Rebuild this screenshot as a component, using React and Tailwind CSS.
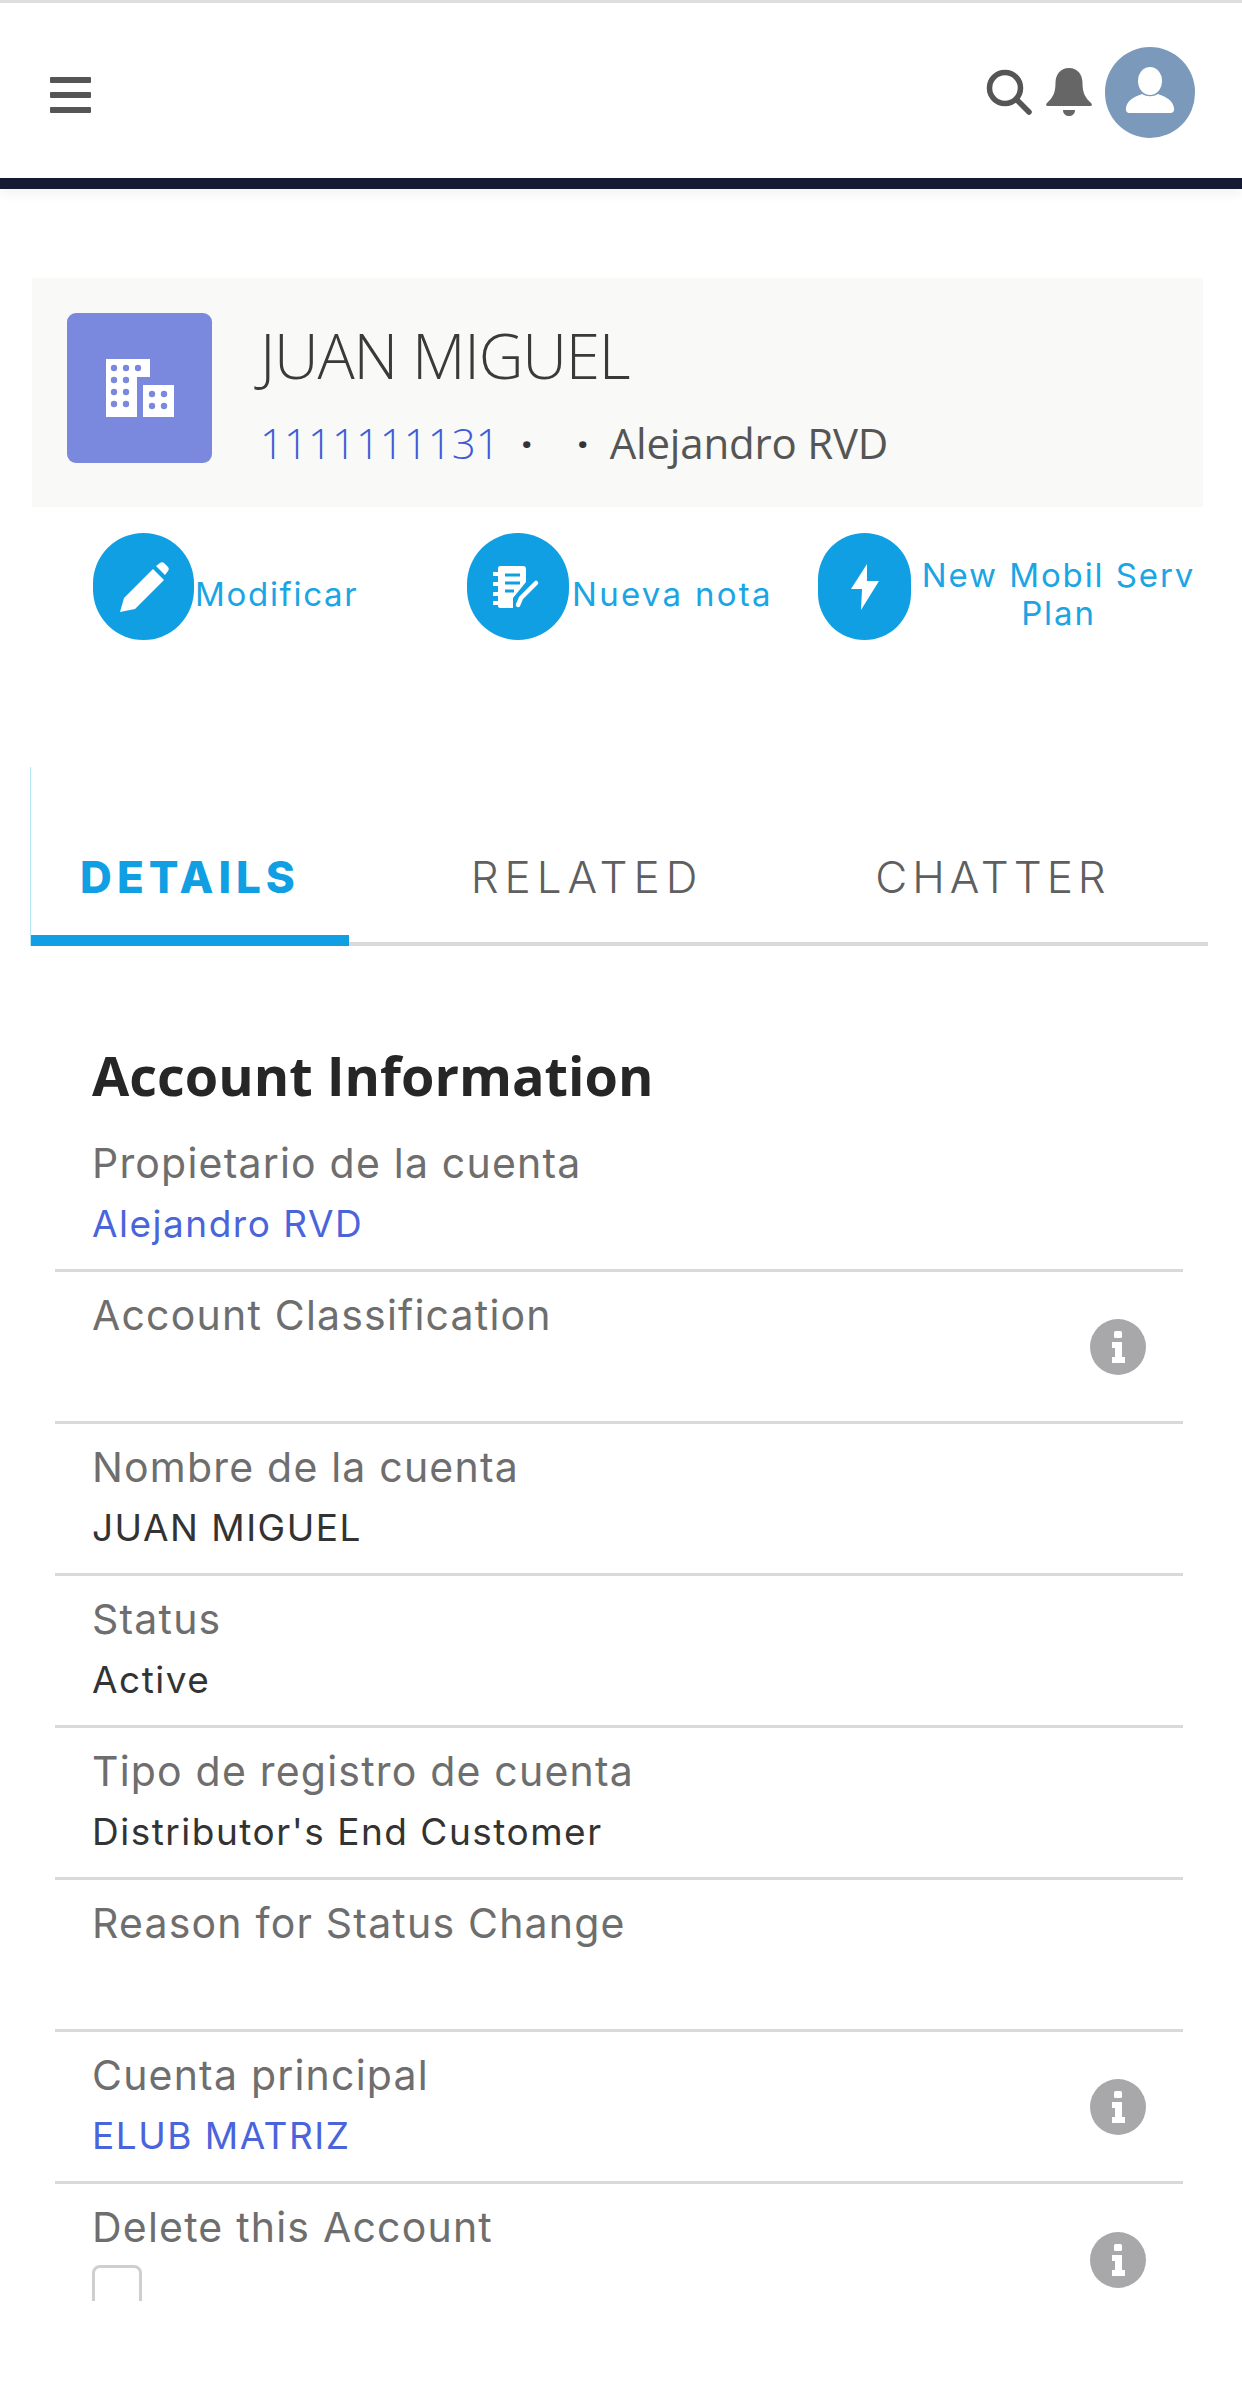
import React from "react";

const Info = () => (
  <svg viewBox="0 0 56 56" className="w-[56px] h-[56px] shrink-0">
    <circle cx="28" cy="28" r="28" fill="#a8a8aa" />
    <rect x="24" y="12" width="8" height="7" rx="1.5" fill="#fff" />
    <path d="M22 23h10v15h3v6H22v-6h3v-9h-3z" fill="#fff" />
  </svg>
);

const Row = ({ label, value, link, info }) => (
  <div className="h-[152px] border-b-[3px] border-[#d9d9d9] pl-[37px] pr-[37px] flex items-center justify-between">
    <div className="self-start pt-[18px]">
      <div className="font-['Inter',sans-serif] text-[41px] leading-[50px] tracking-[1.2px] text-[#6e6e6e]">{label}</div>
      <div className={`font-['Inter',sans-serif] text-[37px] leading-[44px] mt-[14px] tracking-[1.500px] ${link ? "text-[#4a64dc]" : "text-[#333333]"}`}>{value || "\u00a0"}</div>
    </div>
    {info && <Info />}
  </div>
);

const Action = ({ outer, circle, text, children }) => (
  <div className={`flex items-center shrink-0 ${outer}`}>
    <div className={`h-[107px] rounded-full bg-[#0f9fe2] flex items-center justify-center shrink-0 ${circle}`}>{children}</div>
    {text}
  </div>
);

export default function App() {
  return (
    <div className="w-[1242px] h-[2400px] bg-white overflow-hidden">
      <div className="h-[3px] bg-[#dedede]" />
      <header className="h-[175px] pt-[3px] pl-[50px] pr-[47px] flex items-center justify-between">
        <div className="flex flex-col gap-[9px] w-[41px] mt-[5px]">
          <div className="h-[6px] bg-[#555555] rounded-[1px]" />
          <div className="h-[6px] bg-[#555555] rounded-[1px]" />
          <div className="h-[6px] bg-[#555555] rounded-[1px]" />
        </div>
        <div className="flex items-center">
          <svg viewBox="0 0 46 46" className="w-[46px] h-[46px]" fill="none" stroke="#555555" strokeWidth="5.500" strokeLinecap="round">
            <circle cx="19" cy="19" r="15.5" />
            <path d="M31 31l12 12" />
          </svg>
          <svg viewBox="0 0 46 48" className="w-[46px] h-[48px] ml-[14px]" fill="#666666">
            <path d="M23 0c9 0 13.500 7 13.500 15 0 10 3 15 8.500 20 1.500 1.500 1 3-1 3H2c-2 0-2.500-1.500-1-3 5.500-5 8.500-10 8.500-20C9.500 7 14 0 23 0z" />
            <path d="M17 42h12c0 4-3 6-6 6s-6-2-6-6z" />
          </svg>
          <div className="w-[90px] h-[91px] rounded-full bg-[#7b9abb] ml-[13px] flex items-center justify-center">
            <svg viewBox="0 0 50 50" className="w-[50px] h-[50px]" fill="#fff">
              <ellipse cx="25" cy="14" rx="12" ry="14" />
              <path d="M17 27c-9 3-15 7-16 14-.5 3.500 1 5 4 5h40c3 0 4.500-1.500 4-5-1-7-7-11-16-14-5 3-11 3-16 0z" />
            </svg>
          </div>
        </div>
      </header>
      <div className="h-[11px] bg-[#151a33] shadow-[0_5px_12px_rgba(0,0,0,0.06)]" />

      <section className="mt-[89px] ml-[32px] w-[1171px] h-[229px] bg-[#f9f9f8] pl-[35px] pt-[35px] flex">
        <div className="w-[145px] h-[150px] rounded-[9px] bg-[#7a88dd] flex items-center justify-center">
          <svg viewBox="0 0 68 58" className="w-[68px] h-[58px]">
            <path d="M0 0h44v18H31v40H0z" fill="#fff" />
            <rect x="37" y="26" width="31" height="32" fill="#fff" />
            {[[8, 10], [20, 10], [32, 10], [8, 22], [20, 22], [8, 34], [20, 34], [8, 46], [20, 46], [46, 36], [58, 36], [46, 48], [58, 48]].map(([x, y], i) => (
              <circle key={i} cx={x} cy={y - 1} r="3.2" fill="#7a88dd" />
            ))}
          </svg>
        </div>
        <div className="ml-[48px] font-['Open_Sans',sans-serif]">
          <div className="text-[62px] leading-[84px] font-light text-[#3a3a3a] tracking-[-1.2px]">JUAN MIGUEL</div>
          <div className="mt-[18px] flex items-center text-[42px] leading-[56px] font-light">
            <span className="text-[#3f5bd8]">1111111131</span>
            <span className="text-[#333] ml-[21px] font-bold">·</span>
            <span className="text-[#333] ml-[44px] font-bold">·</span>
            <span className="text-[#555555] ml-[21px] font-normal -tracking-[0.2px]">Alejandro RVD</span>
          </div>
        </div>
      </section>

      <section className="mt-[26px] h-[107px] flex font-['Inter',sans-serif] text-[#1aa5e4] text-[33px]">
        <Action outer="w-[467px] pl-[93px]" circle="w-[101px]" text={<span className="ml-[1px] mt-[16px] tracking-[1.7px]">Modificar</span>}>
          <svg viewBox="0 0 50 50" className="w-[50px] h-[50px]" fill="#fff">
            <path d="M1 50l4-14L34 7l11 11-29 29z" />
            <path d="M37 4l4-3c1-1 3-1 4 0l4 4c1 1 1 3 0 4l-3 4z" />
          </svg>
        </Action>
        <Action outer="w-[351px]" circle="w-[102px]" text={<span className="ml-[3px] mt-[16px] tracking-[2.3px]">Nueva nota</span>}>
          <svg viewBox="0 0 50 46" className="w-[50px] h-[46px]" fill="none">
            <path d="M7 2h23c2 0 3 1 3 3v13L20 34v10H7c-1 0-2-1-2-2V4c0-1 1-2 2-2z" fill="#fff" />
            <path d="M1 10h6M1 20h6M1 30h6M1 39h6" stroke="#fff" strokeWidth="4" strokeLinecap="round" />
            <path d="M12 11h15M12 19h15M12 27h9" stroke="#0f9fe2" strokeWidth="3" />
            <path d="M25 41l3-7L43 19" stroke="#fff" strokeWidth="4.500" strokeLinecap="round" />
          </svg>
        </Action>
        <Action outer="flex-1" circle="w-[93px]" text={<span className="ml-[9px] w-[277px] shrink-0 text-center text-[33px] leading-[38px] tracking-[1.9px] mt-[14px]">New Mobil Serv Plan</span>}>
          <svg viewBox="0 0 28 46" className="w-[28px] h-[46px]" fill="#fff">
            <path d="M16 0L0 25h11L10 46 28 17H16z" />
          </svg>
        </Action>
      </section>

      <nav className="mt-[127px] ml-[30px] w-[1178px] h-[179px] border-l border-[#b5e6f8] flex items-end relative font-['Inter',sans-serif]">
        <div className="absolute left-0 right-0 bottom-0 h-[4px] bg-[#d9d9d9]" />
        <div className="relative w-[318px] h-[96px] text-center text-[44px] leading-[54px] font-extrabold text-[#0f9fe2] tracking-[5px]">
          DETAILS
          <div className="absolute left-0 right-0 bottom-0 h-[11px] bg-[#0f9fe2]" />
        </div>
        <div className="w-[318px] ml-[79px] h-[96px] text-center text-[44px] leading-[54px] font-light text-[#5f5f5f] tracking-[6px]">RELATED</div>
        <div className="w-[318px] ml-[88px] h-[96px] text-center text-[44px] leading-[54px] font-light text-[#5f5f5f] tracking-[5px]">CHATTER</div>
      </nav>

      <section className="ml-[55px] w-[1128px]">
        <h2 className="h-[175px] pt-[99px] pl-[37px] font-['Open_Sans',sans-serif] font-bold text-[54px] leading-[60px] text-[#262626]">Account Information</h2>
        <div className="-mt-[1px]">
          <Row label="Propietario de la cuenta" value="Alejandro RVD" link />
          <Row label="Account Classification" info />
          <Row label="Nombre de la cuenta" value="JUAN MIGUEL" />
          <Row label="Status" value="Active" />
          <Row label="Tipo de registro de cuenta" value="Distributor's End Customer" />
          <Row label="Reason for Status Change" />
          <Row label="Cuenta principal" value="ELUB MATRIZ" link info />
          <div className="h-[117px] overflow-hidden">
            <div className="h-[152px] pl-[37px] pr-[37px] flex items-center justify-between">
              <div className="self-start pt-[18px]">
                <div className="font-['Inter',sans-serif] text-[41px] leading-[50px] tracking-[1.2px] text-[#6e6e6e]">Delete this Account</div>
                <div className="mt-[13px] w-[50px] h-[50px] rounded-[8px] border-[3px] border-[#cfcfcf] bg-white" />
              </div>
              <Info />
            </div>
          </div>
        </div>
      </section>
    </div>
  );
}
